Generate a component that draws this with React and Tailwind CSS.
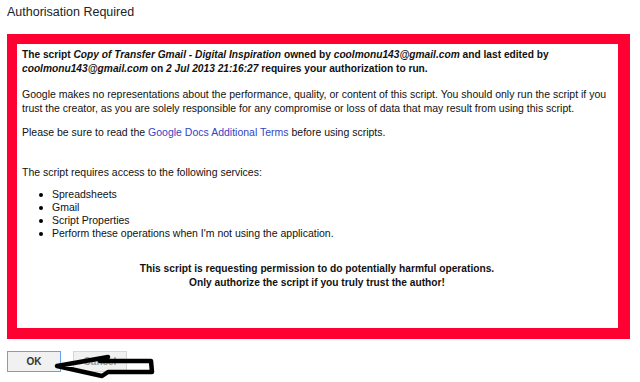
import React from 'react';

const SERVICES = [
  'Spreadsheets',
  'Gmail',
  'Script Properties',
  "Perform these operations when I'm not using the application.",
];

function Arrow() {
  return (
    <svg className="absolute left-[52px] top-[352px]" width="106" height="28" viewBox="0 0 106 28" fill="none">
      <path
        d="M5 14 L56 5 L48 9 L99 9 L100 20 L56 20 L50 24 Z"
        stroke="#000" strokeWidth="4.5" strokeLinejoin="round" fill="none"
      />
    </svg>
  );
}

export default function App() {
  return (
    <div className="relative w-[640px] h-[382px] bg-white text-[#111] overflow-hidden"
      style={{ fontFamily: '"Liberation Sans", Arial, sans-serif' }}>

      {/* Title */}
      <div className="h-[34px] pl-[7px] pt-[4px] text-[12.5px] leading-[16px] text-[#222]">
        Authorisation Required
      </div>

      {/* Red framed body */}
      <div className="ml-[7px] w-[623px] h-[305px] border-[#ff0033] border-t-[10px] border-l-[10px] border-r-[12px] border-b-[11px] pl-[5px] pr-[6px] pt-[4px] text-[10.5px] leading-[14px]">
        <p className="font-bold text-[10.2px]">
          The script <i>Copy of Transfer Gmail - Digital Inspiration</i> owned by <i>coolmonu143@gmail.com</i> and last edited by <i>coolmonu143@gmail.com</i> on <i>2 Jul 2013 21:16:27</i> requires your authorization to run.
        </p>
        <p className="mt-[11px]">
          Google makes no representations about the performance, quality, or content of this script. You should only run the script if you trust the creator, as you are solely responsible for any compromise or loss of data that may result from using this script.
        </p>
        <p className="mt-[10px]">
          Please be sure to read the <span className="text-[#3344c4]">Google Docs Additional Terms</span> before using scripts.
        </p>
        <p className="mt-[26px]">The script requires access to the following services:</p>
        <ul className="mt-[9px] leading-[13px]">
          {SERVICES.map((s) => (
            <li key={s} className="flex items-center">
              <span className="ml-[17px] w-[4px] h-[4px] rounded-full bg-black" />
              <span className="ml-[9px]">{s}</span>
            </li>
          ))}
        </ul>
        <div className="mt-[22px] text-center font-bold text-[10.2px]">
          <p>This script is requesting permission to do potentially harmful operations.</p>
          <p>Only authorize the script if you truly trust the author!</p>
        </div>
      </div>

      {/* Buttons */}
      <div className="flex gap-[12px] ml-[7px] mt-[12px]">
        <button className="w-[54px] h-[21px] border border-[#6a9ff0] bg-[#f1f1f1] text-[10px] font-bold text-[#333]">OK</button>
        <button className="w-[54px] h-[21px] border border-[#d6d6d6] bg-[#f1f1f1] text-[10px] font-bold text-[#999]">Cancel</button>
      </div>

      <Arrow />
    </div>
  );
}
